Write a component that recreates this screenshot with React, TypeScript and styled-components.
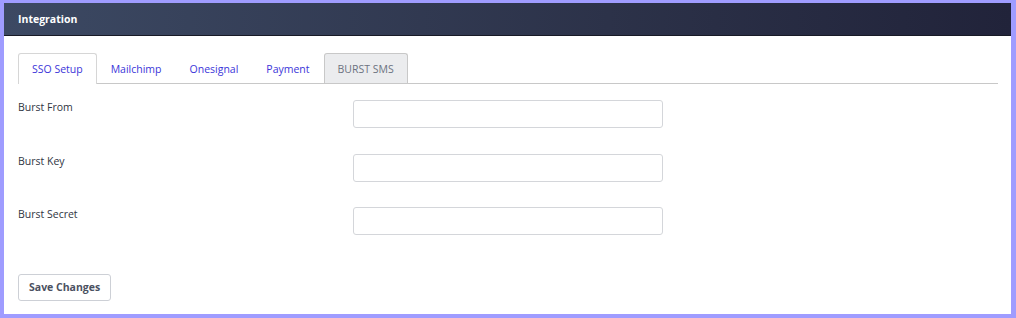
import React from 'react';
import styled, { createGlobalStyle } from 'styled-components';

const GlobalStyle = createGlobalStyle`
  html, body {
    margin: 0;
    padding: 0;
    background: #9f9cff;
  }
  body {
    font-family: "Open Sans", "Noto Sans", Arial, sans-serif;
  }
`;

const Frame = styled.div`
  padding: 3px 5px 4px 4px;
  height: 318px;
  box-sizing: border-box;
`;

const Card = styled.div`
  background: #fff;
  height: 100%;
  display: flex;
  flex-direction: column;
`;

const Header = styled.div`
  height: 32px;
  display: flex;
  align-items: center;
  padding-left: 14px;
  background: linear-gradient(90deg, #3c4963 0%, #2c3249 60%, #21233a 100%);
  border-bottom: 1px solid #181a26;
  color: #fff;
  font-weight: 700;
  font-size: 10.5px;
`;

const Body = styled.div`
  padding: 17px 13px 0 14px;
  display: flex;
  flex-direction: column;
`;

const TabBar = styled.div`
  display: flex;
  height: 30px;
  border-bottom: 1px solid #c8c8c8;
`;

const Tab = styled.div<{ $variant?: 'active' | 'muted' }>`
  display: flex;
  align-items: center;
  padding: 0 13px;
  font-size: 10.5px;
  border: 1px solid transparent;
  border-bottom: none;
  border-radius: 3px 3px 0 0;
  color: #3b35d9;
  ${(p) => p.$variant === 'active' && `
    border-color: #d6d6d6;
    background: #fff;
    margin-bottom: -1px;
  `}
  ${(p) => p.$variant === 'muted' && `
    border-color: #c8c8c8;
    background: #ebecee;
    color: #6c7280;
  `}
`;

const Form = styled.div`
  display: flex;
  flex-direction: column;
  gap: 25.5px;
  padding-top: 16px;
`;

const Row = styled.div`
  display: grid;
  grid-template-columns: 335px 310px;
  align-items: start;
`;

const Label = styled.label`
  font-size: 10.5px;
  color: #2f3542;
  line-height: 15px;
`;

const Input = styled.input`
  height: 28px;
  box-sizing: border-box;
  border: 1px solid #d4d6da;
  border-radius: 3px;
  background: #fff;
  outline: none;
`;

const SaveButton = styled.button`
  margin-top: 38.5px;
  align-self: flex-start;
  height: 27px;
  padding: 0 10px;
  font-family: inherit;
  font-size: 10.5px;
  font-weight: 700;
  color: #4b5161;
  background: #fff;
  border: 1px solid #cdd0d6;
  border-radius: 3px;
`;

const fields = ['Burst From', 'Burst Key', 'Burst Secret'];

export default function App() {
  return (
    <Frame>
      <GlobalStyle />
      <Card>
        <Header>Integration</Header>
        <Body>
          <TabBar>
            <Tab $variant="active">SSO Setup</Tab>
            <Tab>Mailchimp</Tab>
            <Tab>Onesignal</Tab>
            <Tab>Payment</Tab>
            <Tab $variant="muted">BURST SMS</Tab>
          </TabBar>
          <Form>
            {fields.map((f) => (
              <Row key={f}>
                <Label>{f}</Label>
                <Input type="text" />
              </Row>
            ))}
          </Form>
          <SaveButton>Save Changes</SaveButton>
        </Body>
      </Card>
    </Frame>
  );
}
